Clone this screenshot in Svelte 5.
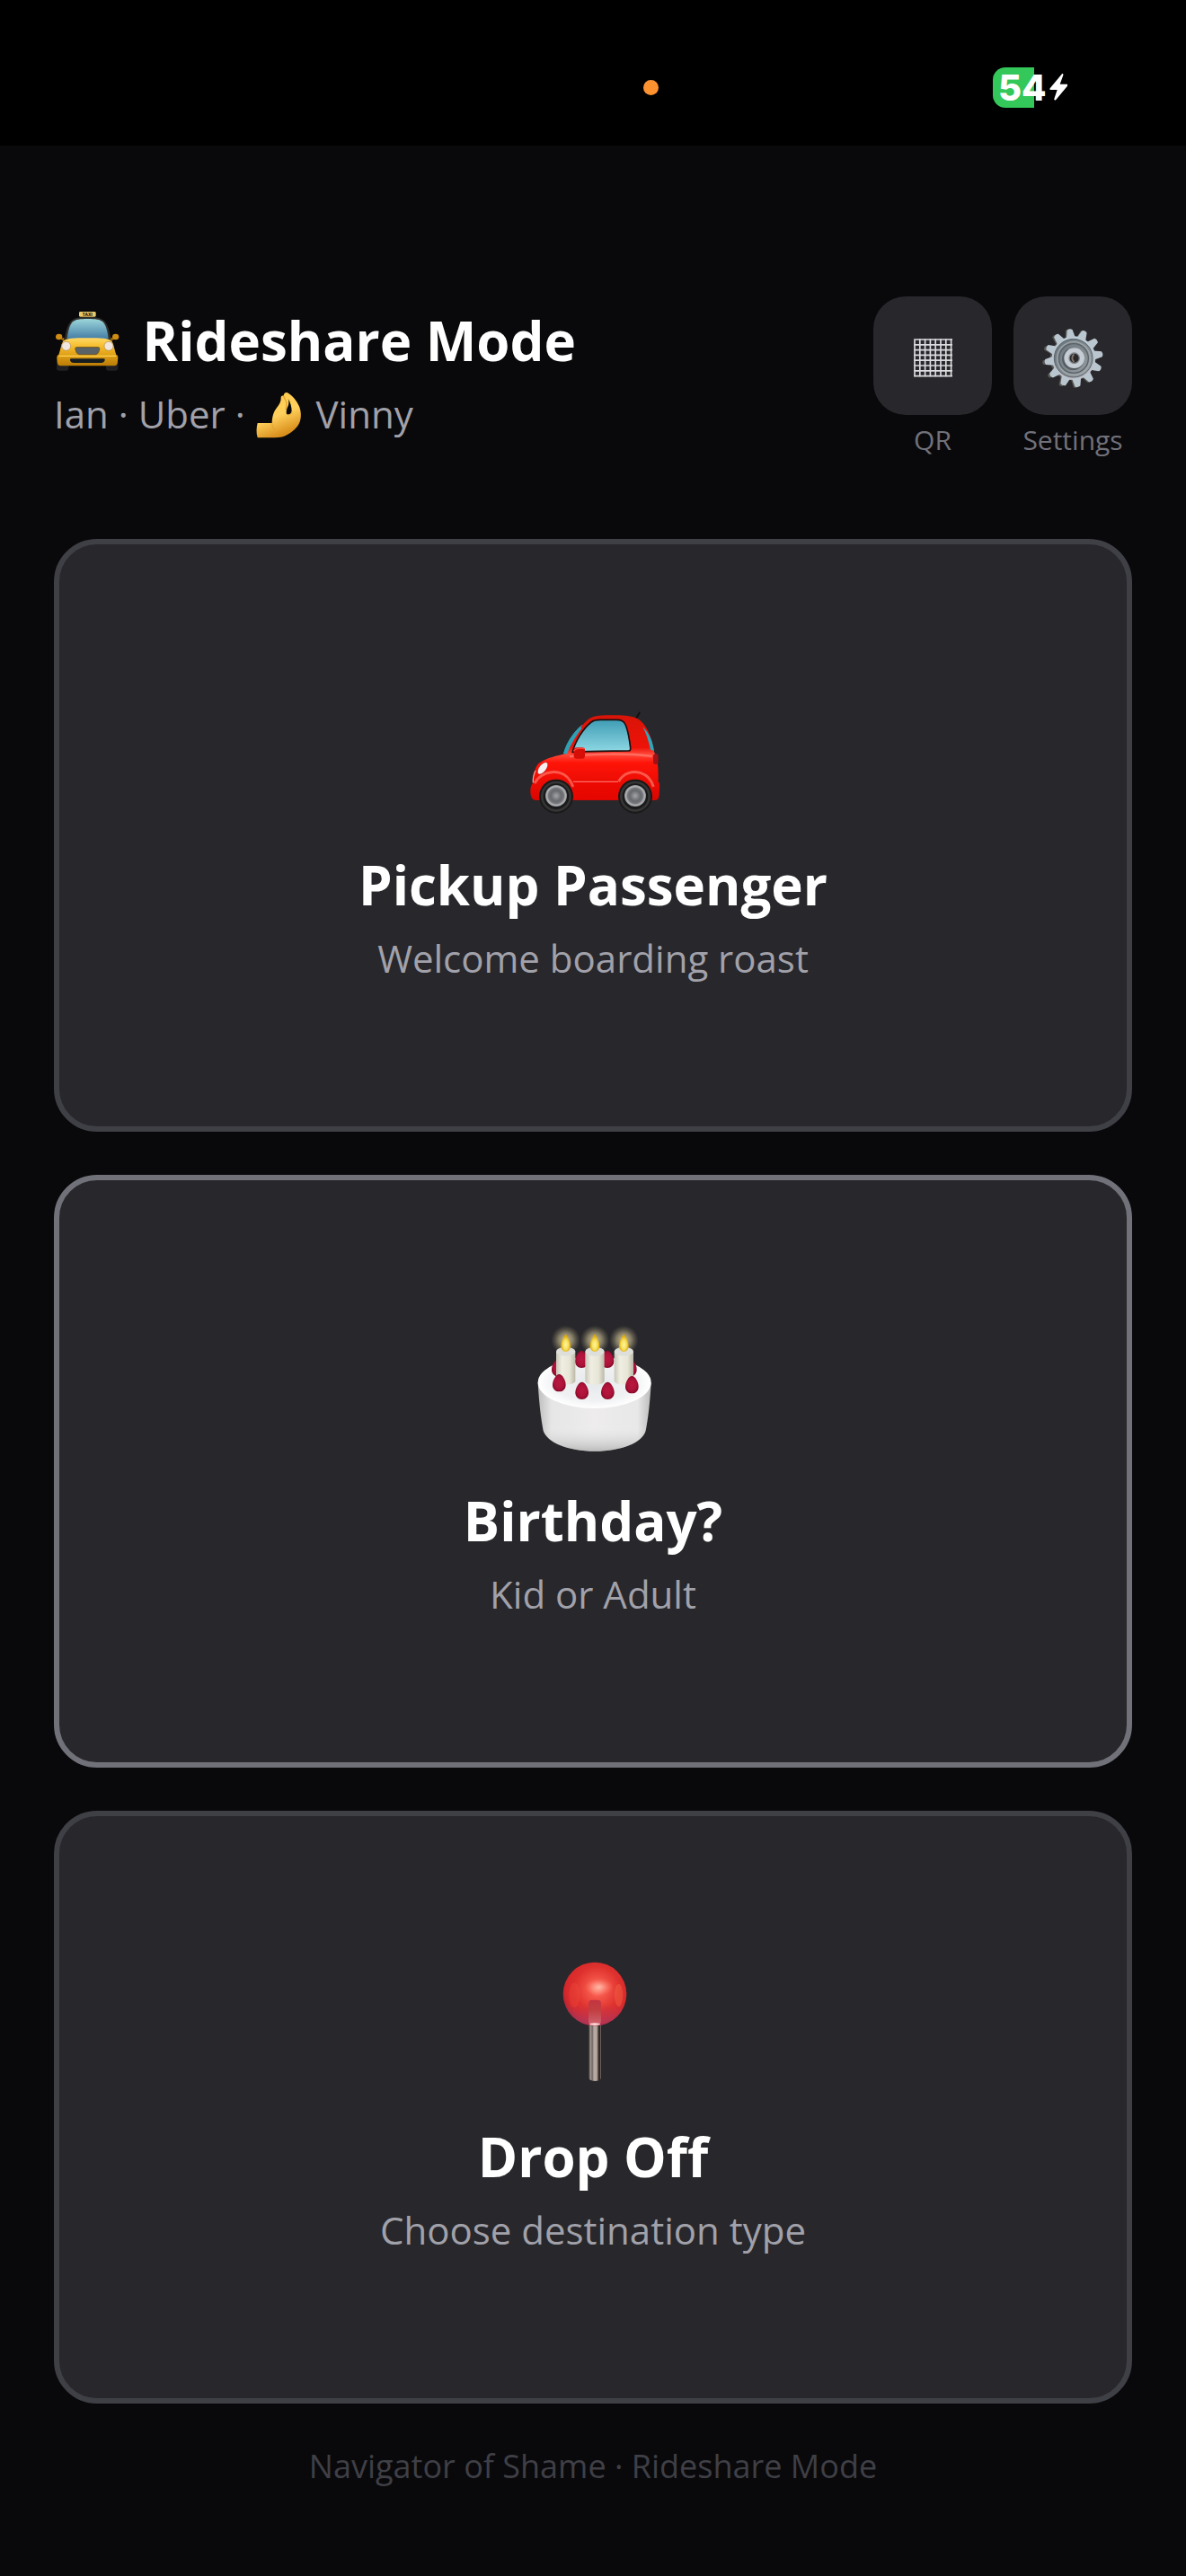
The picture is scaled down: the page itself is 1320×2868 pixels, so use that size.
<script lang="ts">
  const driver = "Ian";
  const platform = "Uber";
  const persona = "Vinny";
  const battery = 54;

  const cards = [
    { id: "pickup", title: "Pickup Passenger", desc: "Welcome boarding roast", highlight: false },
    { id: "birthday", title: "Birthday?", desc: "Kid or Adult", highlight: true },
    { id: "dropoff", title: "Drop Off", desc: "Choose destination type", highlight: false },
  ];

  const teeth = Array.from({ length: 12 }, (_, i) => i * 30 - 8);
  const gridLines = Array.from({ length: 8 }, (_, i) => i);
  const candles = [209, 306, 403];
  const backBerries = [[184, 188], [262, 160], [348, 160], [424, 188]];
  const frontBerries = [[187, 239], [263, 265], [349, 265], [430, 245]];
</script>

{#snippet berry(x: number, y: number)}
  <path
    d="M{x} {y - 29}c10 0 22 20 22 35 0 14-9 23-22 23s-22-9-22-23c0-15 12-35 22-35z"
    fill="url(#berry)"
  />
{/snippet}

{#snippet carIcon()}
  <svg class="card-icon" viewBox="75 -24 450 450" aria-hidden="true">
    <defs>
      <linearGradient id="carBody" x1="0" y1="0" x2="0" y2="1">
        <stop offset="0" stop-color="#d81408" />
        <stop offset=".38" stop-color="#ee1208" />
        <stop offset=".46" stop-color="#ff4a3c" />
        <stop offset=".56" stop-color="#ff1408" />
        <stop offset="1" stop-color="#d90500" />
      </linearGradient>
      <linearGradient id="carGlass" x1="0" y1="0" x2="0" y2="1">
        <stop offset="0" stop-color="#3f9db4" />
        <stop offset="1" stop-color="#8fd8e4" />
      </linearGradient>
      <radialGradient id="carHub">
        <stop offset="0" stop-color="#a2a4a8" />
        <stop offset=".5" stop-color="#67696d" />
        <stop offset=".72" stop-color="#77797d" />
        <stop offset=".86" stop-color="#b4b5b8" />
        <stop offset="1" stop-color="#88898c" />
      </radialGradient>
    </defs>
    <path d="M440 96l15-25" stroke="#111" stroke-width="6" stroke-linecap="round" />
    <path d="M201 208c10-35 33-72 62-97l14 4-50 92z" fill="#2f9fb4" />
    <path
      d="M92 320c2-8 6-12 8-16 0-30 8-60 24-68 22-14 56-22 84-28 18-40 42-88 76-115 14-11 36-14 70-14 42 0 84 0 104 18 28 24 40 68 46 104 12 20 15 54 14 100 5 4 5 12 4 24-1 26 0 38-16 38H112c-22 0-22-26-20-43z"
      fill="url(#carBody)"
    />
    <path d="M466 118c22 20 34 50 38 80l-12-4c-6-28-14-54-26-76z" fill="#2fa6bc" />
    <path d="M201 208c8-34 30-68 56-92l6 6c-20 26-38 56-50 86z" fill="#2f9fb4" />
    <path
      d="M232 202c8-34 34-78 62-100 8-7 18-8 32-8h50c20 0 28 4 34 20 8 22 12 48 15 74 1 8-2 10-8 10-60 1-120 0-185 4z"
      fill="url(#carGlass)"
      stroke="#191010"
      stroke-width="5"
    />
    <path d="M222 217c80-10 190-12 276-1" stroke="#ff8175" stroke-width="7" fill="none" opacity=".65" />
    <path d="M105 306c18-32 55-43 84-35 24 6 36 24 45 47M386 300c16-30 48-36 74-28 24 8 36 26 42 46" stroke="#ff7669" stroke-width="9" fill="none" opacity=".7" />
    <path d="M234 301h150" stroke="#ff6c60" stroke-width="4" />
    <path d="M236 305h148v55H236z" fill="#ec0900" opacity=".6" />
    <rect x="236" y="187" width="37" height="37" rx="9" fill="#d60e07" />
    <path d="M236 199c6-12 26-10 37-8" stroke="#ff4b40" stroke-width="4" fill="none" />
    <ellipse cx="132" cy="256" rx="12" ry="24" transform="rotate(38 132 256)" fill="#f7efef" stroke="#b71a14" stroke-width="2" />
    <path d="M108 264c-6 12-9 25-8 40" stroke="#ff9a90" stroke-width="4" fill="none" />
    <rect x="501" y="208" width="17" height="35" rx="8" fill="#9e1218" />
    {#each [177, 441] as x}
      <circle cx={x} cy="350" r="57" fill="#191919" />
      <circle cx={x} cy="350" r="47" fill="none" stroke="#353535" stroke-width="8" />
      <circle cx={x} cy="348" r="36" fill="url(#carHub)" />
    {/each}
  </svg>
{/snippet}

{#snippet cakeIcon()}
  <svg class="card-icon" viewBox="75 30 450 450" aria-hidden="true">
    <defs>
      <linearGradient id="cakeSide">
        <stop offset="0" stop-color="#bdbdbd" />
        <stop offset=".12" stop-color="#e6e6e6" />
        <stop offset=".5" stop-color="#eeecec" />
        <stop offset=".88" stop-color="#e8e8e8" />
        <stop offset="1" stop-color="#bbb" />
      </linearGradient>
      <linearGradient id="cakeShade" x1="0" y1="0" x2="0" y2="1">
        <stop offset=".6" stop-color="#fff" stop-opacity="0" />
        <stop offset="1" stop-color="#8c8c8c" stop-opacity=".5" />
      </linearGradient>
      <radialGradient id="cakeTop">
        <stop offset="0" stop-color="#e5e9eb" />
        <stop offset=".7" stop-color="#f0f1f3" />
        <stop offset="1" stop-color="#fff" />
      </radialGradient>
      <radialGradient id="glow">
        <stop offset="0" stop-color="#f0e2b0" stop-opacity=".9" />
        <stop offset=".5" stop-color="#c0b58c" stop-opacity=".6" />
        <stop offset="1" stop-color="#8f8768" stop-opacity="0" />
      </radialGradient>
      <radialGradient id="flame" cy=".6">
        <stop offset="0" stop-color="#fff59a" />
        <stop offset=".55" stop-color="#f6e060" />
        <stop offset="1" stop-color="#dca600" />
      </radialGradient>
      <linearGradient id="candle">
        <stop offset="0" stop-color="#c9c6b8" />
        <stop offset=".3" stop-color="#efeee2" />
        <stop offset=".7" stop-color="#e7e5d6" />
        <stop offset="1" stop-color="#bbb8a8" />
      </linearGradient>
      <radialGradient id="berry">
        <stop offset="0" stop-color="#b8173f" />
        <stop offset=".7" stop-color="#ad1238" />
        <stop offset="1" stop-color="#860a28" />
      </radialGradient>
    </defs>
    <path d="M116 238c4 70 10 120 18 160 12 40 84 69 172 69s160-29 170-69c8-40 14-90 18-160z" fill="url(#cakeSide)" />
    <path d="M116 238c4 70 10 120 18 160 12 40 84 69 172 69s160-29 170-69c8-40 14-90 18-160z" fill="url(#cakeShade)" />
    <ellipse cx="305" cy="238" rx="189" ry="86" fill="url(#cakeTop)" />
    {#each backBerries as [x, y]}
      {@render berry(x, y)}
    {/each}
    {#each candles as x}
      <circle cx={x} cy="96" r="49" fill="url(#glow)" />
      <path d="M{x - 32} 134v98c0 8 14 13 32 13s32-5 32-13v-98z" fill="url(#candle)" />
      <ellipse cx={x} cy="134" rx="32" ry="15" fill="#dedfda" />
      <path d="M{x} 76c7 10 16 26 16 39 0 12-7 20-16 20s-16-8-16-20c0-13 9-29 16-39z" fill="url(#flame)" />
    {/each}
    {#each frontBerries as [x, y]}
      {@render berry(x, y)}
    {/each}
  </svg>
{/snippet}

{#snippet pinIcon()}
  <svg class="card-icon" viewBox="75 54 450 450" aria-hidden="true">
    <defs>
      <radialGradient id="pinBall" cx=".54" cy=".42" r=".58">
        <stop offset="0" stop-color="#ff8c7c" />
        <stop offset=".22" stop-color="#f5574a" />
        <stop offset=".6" stop-color="#df322e" />
        <stop offset=".85" stop-color="#d6282b" />
        <stop offset="1" stop-color="#aa2638" />
      </radialGradient>
      <linearGradient id="pinLow" x1="0" y1="0" x2="0" y2="1">
        <stop offset=".66" stop-color="#b23b62" stop-opacity="0" />
        <stop offset=".9" stop-color="#b23b62" stop-opacity=".6" />
      </linearGradient>
      <radialGradient id="pinShine">
        <stop offset="0" stop-color="#ffbcaa" stop-opacity=".95" />
        <stop offset="1" stop-color="#ff8270" stop-opacity="0" />
      </radialGradient>
      <linearGradient id="pinStem">
        <stop offset="0" stop-color="#4c4644" />
        <stop offset=".15" stop-color="#a1968f" />
        <stop offset=".28" stop-color="#6d6461" />
        <stop offset=".42" stop-color="#b9aaa2" />
        <stop offset=".65" stop-color="#b5a59d" />
        <stop offset=".78" stop-color="#453b39" />
        <stop offset=".88" stop-color="#221d1d" />
        <stop offset="1" stop-color="#8b7b73" />
      </linearGradient>
      <linearGradient id="pinCore" x1="0" y1="0" x2="0" y2="1">
        <stop offset="0" stop-color="#b52d43" />
        <stop offset=".4" stop-color="#bb4141" stop-opacity=".9" />
        <stop offset="1" stop-color="#d57078" />
      </linearGradient>
    </defs>
    <path d="M286 278h41v182c0 7-8 11-20 11s-21-4-21-11z" fill="url(#pinStem)" />
    <circle cx="306" cy="180" r="106" fill="url(#pinBall)" />
    <circle cx="306" cy="180" r="106" fill="url(#pinLow)" />
    <ellipse cx="320" cy="157" rx="48" ry="30" fill="url(#pinShine)" />
    <ellipse cx="238" cy="184" rx="18" ry="42" fill="#ff5d48" opacity=".2" />
    <ellipse cx="386" cy="184" rx="14" ry="38" fill="#ff7d50" opacity=".3" />
    <rect x="285" y="200" width="42" height="82" rx="12" fill="url(#pinCore)" opacity=".8" />
    <ellipse cx="306" cy="281" rx="18" ry="4" fill="#ffd6d6" />
  </svg>
{/snippet}

<div class="page">
  <div class="status-bar">
    <span class="mic-dot"></span>
    <div class="battery">
      <span>{battery}</span>
      <svg viewBox="0 0 60 88" aria-hidden="true">
        <path d="M42 0L2 48c-2 3-1 5 2 5h22L16 83c-1 5 3 6 6 3l38-46c2-3 1-6-3-6H35L46 4c1-4-2-6-4-4z" fill="#fff" />
      </svg>
    </div>
  </div>

  <header>
    <div class="heading">
      <h1>
        <svg viewBox="60 39 228 228" aria-hidden="true">
          <defs>
            <linearGradient id="taxiBody" x1="0" y1="0" x2="0" y2="1">
              <stop offset="0" stop-color="#ffd866" />
              <stop offset=".3" stop-color="#f6bd2d" />
              <stop offset=".6" stop-color="#dfa017" />
              <stop offset="1" stop-color="#b97b06" />
            </linearGradient>
            <linearGradient id="taxiGlass" x1="0" y1="0" x2="0" y2="1">
              <stop offset="0" stop-color="#9bd6da" />
              <stop offset="1" stop-color="#447da6" />
            </linearGradient>
          </defs>
          <path d="M69 215h40v26c0 5-3 7-8 7H77c-5 0-8-2-8-7zM234 215h40v26c0 5-3 7-8 7h-24c-5 0-8-2-8-7z" fill="#202022" />
          <path d="M96 148c3-30 9-52 22-66 10-11 30-14 55-14s45 3 55 14c13 14 19 36 22 66z" fill="#312f2c" />
          <path d="M104 142c3-26 8-46 19-57 8-8 25-10 50-10s42 2 50 10c11 11 16 31 19 57z" fill="url(#taxiGlass)" />
          <rect x="144" y="51" width="56" height="17" rx="4" fill="#e9c969" />
          <text x="172" y="65" class="taxi-sign">TAXI</text>
          <path d="M82 142l12-5v14zM262 142l-12-5v14z" fill="#a56e08" />
          <ellipse cx="77" cy="135" rx="11" ry="10" fill="#cf8c14" />
          <ellipse cx="266" cy="135" rx="11" ry="10" fill="#cf8c14" />
          <path d="M90 151c8-11 38-12 82-12s74 1 82 12c6 12 9 30 14 44 8 2 6 12 5 22-1 12-4 15-14 15H85c-10 0-13-3-14-15-1-10-3-20 5-22 5-14 8-32 14-44z" fill="url(#taxiBody)" />
          <path d="M77 199h190" stroke="#ffd252" stroke-width="4" />
          <circle cx="101" cy="166" r="15" fill="#f0e5df" stroke="#ae8a49" stroke-width="2" />
          <circle cx="243" cy="166" r="15" fill="#f0e5df" stroke="#ae8a49" stroke-width="2" />
          <path d="M136 170h72c6 0 5 5 2 14-2 7-7 10-13 10h-50c-6 0-11-3-13-10-3-9-4-14 2-14z" fill="#596266" stroke="#705321" stroke-width="3" />
          <path d="M118 208h108c5 0 5 3 3 8-2 4-6 6-11 6h-92c-5 0-9-2-11-6-2-5-2-8 3-8z" fill="#161d20" />
        </svg>
        Rideshare Mode
      </h1>
      <p>
        {driver} · {platform} ·
        <svg viewBox="102 48 156 156" aria-hidden="true">
          <defs>
            <linearGradient id="hand" x1="0" y1="0" x2=".4" y2="1">
              <stop offset="0" stop-color="#ffc94a" />
              <stop offset=".6" stop-color="#ffd05c" />
              <stop offset="1" stop-color="#d98f1c" />
            </linearGradient>
          </defs>
          <path
            fill-rule="evenodd"
            d="M110 153h48c1-24 6-38 16-51 9-12 15-22 14-34 0-6 5-8 9-6 0-8 7-13 13-10 16 8 32 28 40 48 5 14 6 30 3 42-4 20-20 36-40 48-15 9-28 12-46 12h-57c-5-16-4-34 0-49zM212 72c4 12 2 20-2 28-4 10-5 18-3 24 9 2 16-3 17-11 0-14-4-28-12-41z"
            fill="url(#hand)"
          />
          <path d="M197 62c2 10 9 15 10 25 0 7-3 14-3 22" stroke="#d99421" stroke-width="3" fill="none" />
          <path d="M158 154c1 10 4 17 9 23M208 124c8 4 16 0 17-10" stroke="#dd9924" stroke-width="3" fill="none" opacity=".7" />
        </svg>
        {persona}
      </p>
    </div>

    <nav>
      <div class="tool">
        <button id="qr" aria-labelledby="qr-label">
          <svg class="qr-icon" viewBox="216 180 156 156" aria-hidden="true">
            {#each gridLines as i}
              <path d="M232 {204 + i * 17.4}h128M{234 + i * 17.4} 202v126" stroke="#dcdcde" stroke-width="5" />
            {/each}
          </svg>
        </button>
        <label id="qr-label" for="qr">QR</label>
      </div>
      <div class="tool">
        <button id="settings" aria-labelledby="settings-label">
          <svg class="gear-icon" viewBox="654 150 216 216" aria-hidden="true">
            <defs>
              <linearGradient id="gear" gradientUnits="userSpaceOnUse" x1="0" y1="170" x2="0" y2="362">
                <stop offset="0" stop-color="#c4d8e2" />
                <stop offset=".55" stop-color="#b5bfc9" />
                <stop offset="1" stop-color="#c3b9c2" />
              </linearGradient>
              <linearGradient id="gearDish" x1="0" y1="0" x2="1" y2="1">
                <stop offset="0" stop-color="#667078" />
                <stop offset=".6" stop-color="#858d92" />
                <stop offset="1" stop-color="#9da5aa" />
              </linearGradient>
            </defs>
            <g fill="#575753">
              <circle cx="758" cy="268" r="72" />
              {#each teeth as a}
                <path d="M746 202l5-30q7-5 14 0l5 30z" transform="rotate({a} 758 268)" />
              {/each}
            </g>
            <circle cx="765" cy="266" r="73" fill="url(#gear)" />
            {#each teeth as a}
              <path d="M750 198l6-27q9-6 18 0l6 27z" transform="rotate({a} 765 266)" fill="#bac6cf" />
            {/each}
            <circle cx="764" cy="266" r="64" fill="url(#gearDish)" stroke="#59636a" stroke-width="3" />
            <circle cx="765" cy="267" r="55" fill="none" stroke="#a1a9ad" stroke-width="4" />
            <circle cx="765" cy="267" r="49" fill="none" stroke="#59636a" stroke-width="4" />
            <circle cx="763" cy="269" r="37" fill="#555d63" />
            <circle cx="767" cy="266" r="34" fill="#c5ccd3" />
            <circle cx="767" cy="266" r="17" fill="#29282a" stroke="#7e858b" stroke-width="4" />
            <path d="M766 253c-8 8-8 18 0 26" stroke="#82756a" stroke-width="6" fill="none" />
          </svg>
        </button>
        <label id="settings-label" for="settings">Settings</label>
      </div>
    </nav>
  </header>

  <main>
    {#each cards as card (card.id)}
      <button class="card" class:highlight={card.highlight}>
        {#if card.id === "pickup"}
          {@render carIcon()}
        {:else if card.id === "birthday"}
          {@render cakeIcon()}
        {:else}
          {@render pinIcon()}
        {/if}
        <span class="card-title">{card.title}</span>
        <span class="card-desc">{card.desc}</span>
      </button>
    {/each}
  </main>

  <footer>Navigator of Shame · Rideshare Mode</footer>
</div>

<style>
  :global(body) {
    margin: 0;
    background: #09090b;
  }

  .page {
    min-height: 100vh;
    display: flex;
    flex-direction: column;
    background: #09090b;
    color: #fff;
    font-family: "Open Sans", "Noto Sans", sans-serif;
  }

  .status-bar {
    height: 162px;
    box-sizing: border-box;
    padding: 32px 130px 0 0;
    display: flex;
    align-items: center;
    justify-content: flex-end;
    gap: 372px;
    background: #000;
  }

  .mic-dot {
    width: 17px;
    height: 17px;
    border-radius: 50%;
    background: #ff9230;
  }

  .battery {
    width: 85px;
    height: 45px;
    box-sizing: border-box;
    padding-left: 6px;
    display: flex;
    align-items: center;
    gap: 3px;
    border-radius: 14px;
    background: linear-gradient(to right, #34c759 54%, transparent 54%);
    font-family: Inter, sans-serif;
    font-size: 40px;
    font-weight: 800;
    line-height: 45px;
  }

  .battery svg {
    width: 20px;
    height: 30px;
    flex: none;
  }

  header {
    padding: 168px 60px 88px;
    display: flex;
    justify-content: space-between;
    align-items: flex-start;
  }

  h1 {
    margin: 0;
    font-size: 60px;
    font-weight: 700;
    line-height: 98px;
  }

  h1 svg {
    width: 76px;
    height: 76px;
    margin-right: 7px;
    vertical-align: -17px;
  }

  .taxi-sign {
    font-size: 14px;
    font-weight: 800;
    text-anchor: middle;
    fill: #33290c;
  }

  p {
    margin: 0;
    font-size: 42px;
    line-height: 66px;
    color: #a1a1aa;
  }

  p svg {
    width: 52px;
    height: 52px;
    margin-right: 5px;
    vertical-align: -11px;
  }

  nav {
    display: flex;
    gap: 24px;
  }

  .tool {
    width: 132px;
    display: flex;
    flex-direction: column;
    align-items: center;
    gap: 5px;
  }

  .tool button {
    width: 132px;
    height: 132px;
    padding: 0;
    display: flex;
    align-items: center;
    justify-content: center;
    border: none;
    border-radius: 36px;
    background: #28272b;
    cursor: pointer;
  }

  .tool label {
    font-size: 30px;
    line-height: 45px;
    color: #71717a;
  }

  .qr-icon {
    width: 52px;
    height: 52px;
  }

  .gear-icon {
    width: 72px;
    height: 72px;
  }

  main {
    flex: 1;
    padding: 0 60px;
    display: flex;
    flex-direction: column;
    gap: 48px;
  }

  .card {
    flex: 1;
    padding: 24px;
    display: flex;
    flex-direction: column;
    align-items: center;
    justify-content: center;
    border: 6px solid #3f3f46;
    border-radius: 48px;
    background: #28272b;
    color: #fff;
    font-family: inherit;
    cursor: pointer;
  }

  .card.highlight {
    border-color: #71717a;
  }

  .card-icon {
    width: 150px;
    height: 150px;
    margin-bottom: 28px;
  }

  .card-title {
    font-size: 60px;
    font-weight: 700;
    line-height: 90px;
    margin-bottom: 5px;
  }

  .card-desc {
    font-size: 42px;
    line-height: 63px;
    color: #a1a1aa;
  }

  footer {
    padding: 43px 60px 95px;
    font-size: 36px;
    line-height: 54px;
    text-align: center;
    color: #3f3f46;
  }
</style>
